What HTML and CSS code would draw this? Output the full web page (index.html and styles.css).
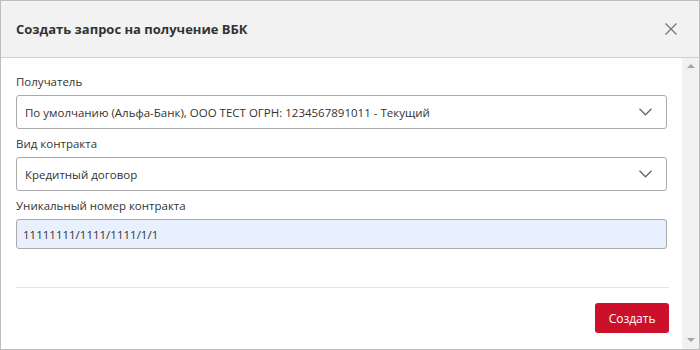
FILE: index.html
```html
<!DOCTYPE html>
<html>
 <head>
  <title>Создать запрос на получение ВБК</title>
  <link rel="stylesheet" href="styles.css">
 </head>
 <body>

 <div class="modal">
  <div class="modal-header">
    <h2>Создать запрос на получение ВБК</h2>
    <svg class="close" width="12" height="12" viewBox="0 0 12 12">
      <path d="M0.5 0.5 L11.5 11.5 M11.5 0.5 L0.5 11.5" stroke="#777" stroke-width="1.3" fill="none"/>
    </svg>
  </div>

  <div class="modal-main">
    <div class="modal-body">
      <form onsubmit="return false;">
        <div class="entry">
          <label>Получатель</label>
          <div class="select">
            <span>По умолчанию (Альфа-Банк), ООО ТЕСТ ОГРН: 1234567891011 - Текущий</span>
            <svg width="13" height="8" viewBox="0 0 13 8"><path d="M0.5 0.8 L6.5 6.8 L12.5 0.8" stroke="#666" stroke-width="1.3" fill="none"/></svg>
          </div>
        </div>

        <div class="entry">
          <label>Вид контракта</label>
          <div class="select">
            <span>Кредитный договор</span>
            <svg width="13" height="8" viewBox="0 0 13 8"><path d="M0.5 0.8 L6.5 6.8 L12.5 0.8" stroke="#666" stroke-width="1.3" fill="none"/></svg>
          </div>
        </div>

        <div class="entry">
          <label>Уникальный номер контракта</label>
          <div class="input">11111111/1111/1111/1/1</div>
        </div>
      </form>

      <div class="modal-footer">
        <button>Создать</button>
      </div>
    </div>

    <div class="scrollbar">
      <span class="arrow up"></span>
      <span class="arrow down"></span>
    </div>
  </div>
 </div>

 </body>
</html>
```

FILE: styles.css
```css
body {
  margin: 0;
  background: #fff;
  font-family: "Open Sans", sans-serif;
  font-size: 11.5px;
  color: #333;
}
.modal {
  width: 700px;
  height: 350px;
  box-sizing: border-box;
  border: 1px solid #bdbdbd;
  display: flex;
  flex-direction: column;
}
.modal-header {
  height: 56px;
  flex: none;
  background: #f2f2f2;
  border-bottom: 1px solid #cfcfcf;
  padding: 0 22px 0 15px;
  display: flex;
  align-items: center;
  justify-content: space-between;
}
.modal-header h2 {
  margin: 0;
  font-size: 13px;
  font-weight: bold;
  color: #333;
}
.modal-main {
  flex: 1;
  display: flex;
}
.modal-body {
  flex: 1;
  padding: 14px 15px 0 15px;
}
.entry {
  margin-bottom: 5px;
}
.entry label {
  display: block;
  line-height: 20px;
  margin-bottom: 3px;
}
.select {
  height: 34px;
  box-sizing: border-box;
  border: 1px solid #aaa;
  border-radius: 3px;
  padding: 0 14px 0 8px;
  display: flex;
  align-items: center;
  justify-content: space-between;
}
.input {
  height: 30px;
  box-sizing: border-box;
  border: 1px solid #aaa;
  border-radius: 3px;
  background: #e8f0fe;
  padding: 0 6px;
  display: flex;
  align-items: center;
}
.modal-footer {
  margin: 38px -2px 0 0;
  border-top: 1px solid #e3e3e3;
  padding: 15px 0;
  display: flex;
  justify-content: flex-end;
}
.modal-footer button {
  height: 30px;
  padding: 0 13.5px;
  border: none;
  border-radius: 3px;
  background: #cd1029;
  color: #fff;
  font-family: inherit;
  font-size: 12px;
}
.scrollbar {
  width: 17px;
  background: #f1f1f1;
  display: flex;
  flex-direction: column;
  justify-content: space-between;
  align-items: center;
  padding: 6px 0 7px;
}
.arrow {
  width: 0;
  height: 0;
  border-left: 4px solid transparent;
  border-right: 4px solid transparent;
}
.arrow.up {
  border-bottom: 4px solid #a3a3a3;
}
.arrow.down {
  border-top: 4px solid #a3a3a3;
}
```
